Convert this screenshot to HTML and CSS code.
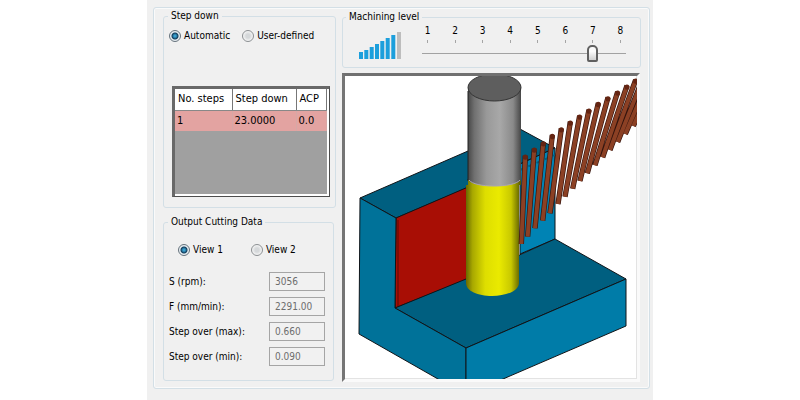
FILE: index.html
```html
<!DOCTYPE html>
<html lang="en">
<head>
<meta charset="utf-8">
<title>Machining parameters</title>
<link rel="stylesheet" href="styles.css">
</head>
<body>
<main class="dialog">
  <form class="frame">
    <div class="column">
      <fieldset class="group">
        <legend>Step down</legend>
        <div class="choices">
          <label class="choice"><input type="radio" name="mode" checked>Automatic</label>
          <label class="choice"><input type="radio" name="mode">User-defined</label>
        </div>
        <div class="grid-box">
          <table class="steps">
            <thead><tr><th class="wide">No. steps</th><th class="wider">Step down</th><th>ACP</th></tr></thead>
            <tbody><tr><td>1</td><td>23.0000</td><td>0.0</td></tr></tbody>
          </table>
        </div>
      </fieldset>
      <fieldset class="group output">
        <legend>Output Cutting Data</legend>
        <div class="choices views">
          <label class="choice"><input type="radio" name="view" checked>View 1</label>
          <label class="choice"><input type="radio" name="view">View 2</label>
        </div>
        <div class="fields">
          <label for="speed">S (rpm):</label><input id="speed" type="text" value="3056" readonly>
          <label for="feed">F (mm/min):</label><input id="feed" type="text" value="2291.00" readonly>
          <label for="over-max">Step over (max):</label><input id="over-max" type="text" value="0.660" readonly>
          <label for="over-min">Step over (min):</label><input id="over-min" type="text" value="0.090" readonly>
        </div>
      </fieldset>
    </div>
    <div class="column main">
      <fieldset class="group level">
        <legend>Machining level</legend>
        <div class="level-row">
          <svg class="bars" viewBox="0 0 42 27" width="42" height="27" aria-hidden="true">
            <g fill="#1c9fdc">
              <rect x="0" y="20" width="4" height="7"/><rect x="5.3" y="18" width="4" height="9"/>
              <rect x="10.7" y="15" width="4" height="12"/><rect x="16" y="12" width="4" height="15"/>
              <rect x="21.3" y="9" width="4" height="18"/><rect x="26.7" y="6" width="4" height="21"/>
              <rect x="32.3" y="3" width="4" height="24"/>
            </g>
            <rect x="38" y="0" width="4" height="27" fill="#bdbdbd"/>
          </svg>
          <div class="scale">
            <div class="marks"><span>1</span><span>2</span><span>3</span><span>4</span><span>5</span><span>6</span><span>7</span><span>8</span></div>
            <input class="slider" type="range" min="1" max="8" value="7" aria-label="Machining level">
          </div>
        </div>
      </fieldset>
      <div class="viewport">
        <svg viewBox="345 76 292 303" role="img" aria-label="Workpiece with tool and approach path">
          <defs>
            <linearGradient id="steel"><stop offset="0" stop-color="#484848"/><stop offset=".12" stop-color="#707070"/><stop offset=".35" stop-color="#999"/><stop offset=".6" stop-color="#a8a8a8"/><stop offset=".85" stop-color="#8a8a8a"/><stop offset="1" stop-color="#474747"/></linearGradient>
            <linearGradient id="flute"><stop offset="0" stop-color="#686800"/><stop offset=".12" stop-color="#a8a800"/><stop offset=".35" stop-color="#dede00"/><stop offset=".6" stop-color="#eaea00"/><stop offset=".82" stop-color="#c8c800"/><stop offset="1" stop-color="#555500"/></linearGradient>
          </defs>
          <g stroke="#101418" stroke-width="1" stroke-linejoin="round">
            <path d="M360 198L468 151 520 129 555 148 520 164 467 188 396 218Z" fill="#005f80"/>
            <path d="M520 164L555 148V239L520 254Z" fill="#0083b4"/>
            <path d="M396 218L468 187V279L395 308Z" fill="#a80e05"/>
            <path d="M398 220V306" fill="none" stroke="#5a0805"/>
            <path d="M395 308L466 279 555 239 626 279 466 348Z" fill="#005f80"/>
            <path d="M360 198L396 218 395 308 466 348V395L438 379 359 334Z" fill="#007299"/>
            <path d="M466 348L626 279V326L503 379 466 395Z" fill="#007ca8"/>
          </g>
          <path d="M520 170L555 155" stroke="#005f80" stroke-width="2" stroke-dasharray="5 4"/>
          <path d="M468 180V185H466V283C466 291 478 296 492 296S519 291 519 283V185H521V180Z" fill="url(#flute)"/>
          <path d="M468 87H521V179C521 183 509 186 494 186S468 183 468 179Z" fill="url(#steel)"/>
          <path d="M469 180C472 184 482 186 494 186S517 184 520 180" fill="none" stroke="#aaa5b3"/>
          <ellipse cx="494.500" cy="87.500" rx="26.500" ry="13.500" fill="#5e5e5e" stroke="#343434"/>
          <path d="M468 91V180H467" fill="none" stroke="#222"/>
          <g transform="translate(490 70) scale(.333333)" stroke-linecap="butt">
            <path stroke="#35140d" stroke-width="16" d="M517 -25L430 168M491 -7L406 192M464 12L383 216M437 30L360 240M411 47L338 262M383 65L315 286M354 82L292 310M325 99L270 333M297 119L248 356M269 137L225 380M241 155L204 402M214 175L180 430M187 195L158 452M160 217L135 475M133 236L113 500M106 257L94 522"/>
            <path stroke="#8b4024" stroke-width="12" d="M517 -25L430 168M491 -7L406 192M464 12L383 216M437 30L360 240M411 47L338 262M383 65L315 286M354 82L292 310M325 99L270 333M297 119L248 356M269 137L225 380M241 155L204 402M214 175L180 430M187 195L158 452M160 217L135 475M133 236L113 500M106 257L94 522"/>
            <path stroke="#642412" stroke-width="15" stroke-linecap="round" d="M437 33v1M411 51v1M383 69v1M354 86v1M325 103v1M297 123v1M269 141v1M241 159v1M214 179v1M187 199v1M160 221v1M133 240v1M106 261v1"/>
          </g>
        </svg>
      </div>
    </div>
  </form>
</main>
</body>
</html>
```
FILE: styles.css
```css
* { box-sizing: border-box; }

body {
  margin: 0;
  background: #fff;
  color: #000;
  font: 10px/14px "DejaVu Sans Condensed", "Noto Sans", sans-serif;
}

input { font: inherit; margin: 0; }

.dialog {
  min-height: 100vh;
  margin: 0 147px;
  padding: 7px 3px 11px 6px;
  background: #f0f0f0;
}

.frame {
  display: grid;
  grid-template-columns: 173px 1fr;
  gap: 6px;
  padding: 1px 8px 6px 9px;
  border: 1px solid #d3dfe6;
  border-radius: 3px;
  box-shadow: inset 0 0 0 1px #fafafa;
}

.column {
  display: flex;
  flex-direction: column;
  gap: 7px;
  min-width: 0;
}

.main { gap: 5px; padding-top: 1px; }

.group {
  min-width: 0;
  margin: 0;
  padding: 0 5px 10px;
  border: 1px solid #d3dfe6;
  border-radius: 3px;
}

.group legend { margin-left: -1px; padding: 0 3px; }

.output { margin-right: 2px; padding-bottom: 14px; }

.choices { display: flex; gap: 12px; padding-top: 6px; }
.views { gap: 28px; padding: 14px 0 0 9px; }
.choice { display: flex; align-items: center; gap: 3px; white-space: nowrap; }

input[type="radio"] {
  appearance: none;
  width: 12px;
  height: 12px;
  border: 1px solid #8b8f92;
  border-radius: 50%;
  background: radial-gradient(circle, #d5d8da 0 2px, #f6f6f6 5px);
}

input[type="radio"]:checked {
  border-color: #65727c;
  background: radial-gradient(circle, #38a0cf 0 1px, #123d5c 3px, #e8eef2 4px);
}

.grid-box {
  height: 111px;
  margin: 43px 0 0 3px;
  border: 1px solid #4d4d4d;
  border-top: 3px solid #696969;
  border-left: 3px solid #696969;
  background: #a0a0a0;
  box-shadow: inset -2px -2px 0 #fff;
  padding-right: 2px;
}

.steps {
  width: 100%;
  border-collapse: collapse;
  table-layout: fixed;
  font-size: 11px;
}

.steps th, .steps td {
  height: 21px;
  padding: 0 3px;
  text-align: left;
  font-weight: normal;
  white-space: nowrap;
}

.steps th {
  border-right: 1px solid #777;
  border-bottom: 1px solid #888;
  background: #fff;
}

.steps td { padding: 0 2px; background: #e3a3a1; border-right: 1px solid #d6a8a6; }
.wide { width: 57px; }
.wider { width: 64px; }

.fields {
  display: grid;
  grid-template-columns: 1fr 56px;
  gap: 6px;
  align-items: center;
  margin: 15px 3px 0 0;
}

.fields input {
  width: 100%;
  height: 19px;
  padding: 0 5px;
  border: 1px solid #a5a5a5;
  background: #f1f1f1;
  color: #6d6d6d;
}

.level { padding: 0 14px 0 16px; }
.level legend { margin-left: -13px; }
.level-row { display: flex; align-items: flex-end; gap: 21px; padding-bottom: 4px; }
.bars { flex: none; margin-bottom: 4px; }
.scale { flex: 1; min-width: 0; }

.marks { display: flex; justify-content: space-between; }

.marks span { width: 11px; text-align: center; }

.marks span::after {
  content: "";
  display: block;
  width: 1px;
  height: 3px;
  margin: 2px auto 0;
  background: #a5a5a5;
}

.slider {
  appearance: none;
  display: block;
  width: 100%;
  height: 20px;
  background: linear-gradient(#a2a2a2, #a2a2a2) center / 100% 1px no-repeat;
}

.slider::-webkit-slider-thumb {
  appearance: none;
  width: 11px;
  height: 17px;
  border: 2px solid #606060;
  border-radius: 5px 5px 2px 2px;
  background: linear-gradient(#fafafa 35%, #cfcfcf);
}

.viewport {
  margin-right: 1px;
  border: 3px solid #fafafa;
  border-top-color: #707070;
  border-left-color: #757575;
  background: #fff;
  box-shadow: inset -1px -1px 0 #e3e3e3;
}

.viewport svg { display: block; width: 100%; height: auto; }
```
